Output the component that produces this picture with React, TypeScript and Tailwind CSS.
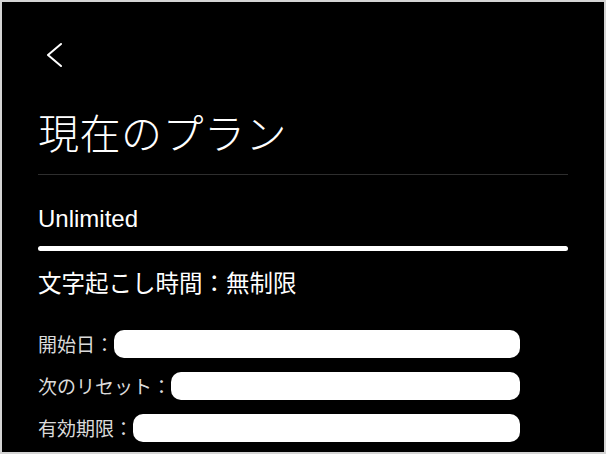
import React from 'react';

const rows = [
  { label: '開始日：' },
  { label: '次のリセット：' },
  { label: '有効期限：' },
];

export default function App() {
  return (
    <div
      className="w-[606px] h-[454px] border-2 border-[#d4d4d4] bg-black text-white overflow-hidden"
      style={{ fontFamily: '"Liberation Sans", "Noto Sans CJK JP", sans-serif' }}
    >
      <div className="px-[36px]">
        {/* back */}
        <button className="block mt-[40px] ml-[8px] w-[16px] h-[26px]">
          <svg width="16" height="26" viewBox="0 0 16 26" fill="none">
            <polyline points="15,2 2,13 15,24" stroke="white" strokeWidth="2" strokeLinecap="round" strokeLinejoin="round" />
          </svg>
        </button>

        <h1 className="mt-[39px] text-[41px] leading-[48px] font-light tracking-[0.5px] font-['Noto_Sans_CJK_JP',sans-serif]">
          現在のプラン
        </h1>

        <div className="mt-[19px] h-px bg-[#2e2e2e]" />

        <div className="mt-[28px] text-[24px] leading-[32px]">Unlimited</div>

        <div className="mt-[11px] h-[5px] rounded-full bg-white" />

        <div className="mt-[15px] text-[23.5px] leading-[32px] font-['Noto_Sans_CJK_JP',sans-serif]">
          文字起こし時間：無制限
        </div>

        <div className="mt-[32px] w-[482px] flex flex-col gap-[14px]">
          {rows.map((r) => (
            <div key={r.label} className="flex items-center h-[28px]">
              <span className="text-[19px] leading-[28px] text-[#dadada] font-['Noto_Sans_CJK_JP',sans-serif] whitespace-nowrap">
                {r.label}
              </span>
              <div className="flex-1 h-[28px] rounded-[10px] bg-white" />
            </div>
          ))}
        </div>
      </div>
    </div>
  );
}
